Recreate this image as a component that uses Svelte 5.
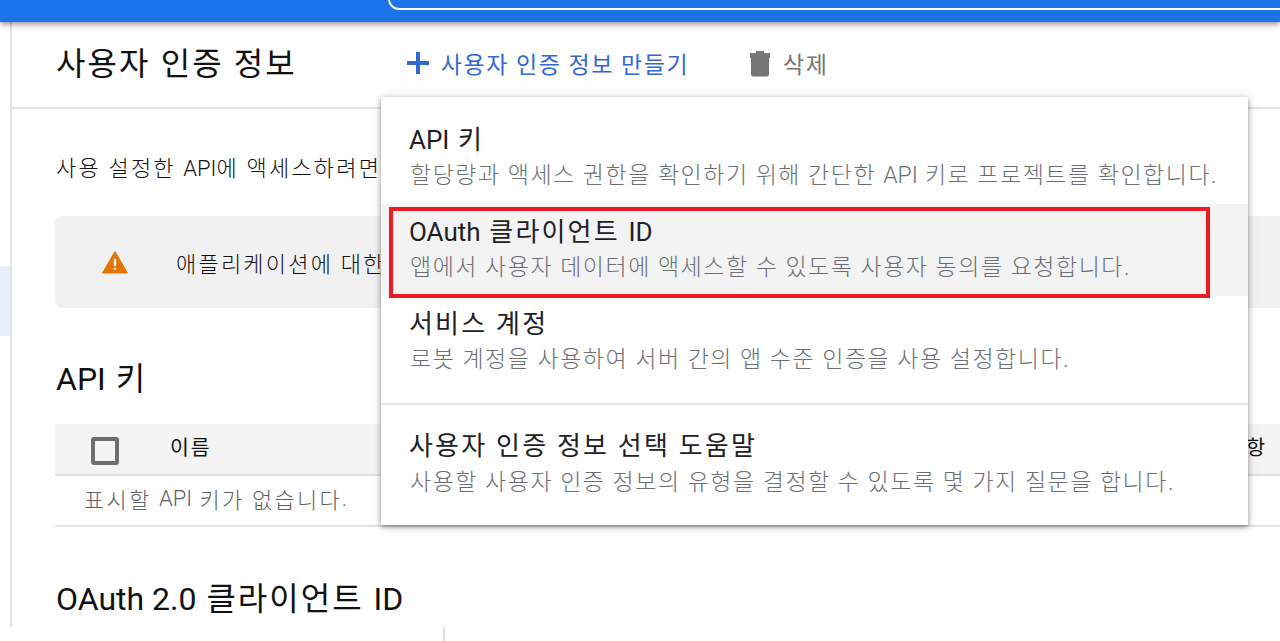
<script>
  const items = [
    { title: 'API 키', desc: '할당량과 액세스 권한을 확인하기 위해 간단한 API 키로 프로젝트를 확인합니다.' },
    { title: 'OAuth 클라이언트 ID', desc: '앱에서 사용자 데이터에 액세스할 수 있도록 사용자 동의를 요청합니다.', active: true },
    { title: '서비스 계정', desc: '로봇 계정을 사용하여 서버 간의 앱 수준 인증을 사용 설정합니다.' }
  ];
  // Latin runs keep natural spacing; only the Hangul runs are tracked out.
  const runs = (text) => text.split(/([A-Za-z0-9.]+(?: [0-9.]+)?)/).filter(Boolean).map((t) => ({ t, latin: /^[A-Za-z0-9.]/.test(t) }));
</script>

{#snippet mixed(text)}{#each runs(text) as r}<span class:latin={r.latin}>{r.t}</span>{/each}{/snippet}

<div class="page">
  <header class="topbar"><div class="search"></div></header>
  <div class="body">
    <aside class="rail"><div class="rail-active"></div></aside>
    <main class="main">
      <div class="head">
        <h1>사용자 인증 정보</h1>
        <button class="act create">
          <svg width="22" height="22" viewBox="0 0 22 22"><path d="M9 0h4v9h9v4h-9v9H9v-9H0V9h9z" fill="#3367d6"/></svg>
          사용자 인증 정보 만들기
        </button>
        <button class="act del">
          <svg class="bin" width="22" height="26" viewBox="0 0 22 26"><path d="M7 0h8v2H7zM1 2h20v5H1zM2 7h18v16a2.500 2.500 0 0 1-2.500 2.500h-13A2.500 2.500 0 0 1 2 23z" fill="#757575"/></svg>
          삭제
        </button>
      </div>
      <div class="content">
        <p class="intro">{@render mixed('사용 설정한 API에 액세스하려면')}</p>
        <div class="alert">
          <svg width="26" height="24" viewBox="0 0 26 24"><path d="M13 1.500 25.500 23H.5z" fill="#e37400" stroke="#e37400" stroke-linejoin="round"/><path d="M11.800 9h2.400v7h-2.400zM11.800 17.700h2.400v2.400h-2.400z" fill="#fff"/></svg>
          <span>애플리케이션에 대한</span>
        </div>
        <h2 class="api">{@render mixed('API 키')}</h2>
        <div class="thead">
          <span class="check"></span>
          <span class="name">이름</span>
          <span class="limit">제한사항</span>
        </div>
        <div class="empty">{@render mixed('표시할 API 키가 없습니다.')}</div>
        <h2 class="oauth">{@render mixed('OAuth 2.0 클라이언트 ID')}</h2>
      </div>
    </main>
  </div>
  <div class="foot"><span class="tick"></span></div>

  <div class="menu">
    <div class="group">
      {#each items as item}
        <div class="item" class:active={item.active}>
          <div class="title">{@render mixed(item.title)}</div>
          <div class="desc">{@render mixed(item.desc)}</div>
        </div>
      {/each}
    </div>
    <div class="item help">
      <div class="title">사용자 인증 정보 선택 도움말</div>
      <div class="desc">사용할 사용자 인증 정보의 유형을 결정할 수 있도록 몇 가지 질문을 합니다.</div>
    </div>
  </div>
  <div class="mark"></div>
</div>

<style>
  :global(body) { margin: 0; background: #fff; }
  .page {
    position: relative; width: 1280px; height: 641px; overflow: hidden;
    font-family: Roboto, "Noto Sans CJK KR", sans-serif; color: #111;
    display: flex; flex-direction: column;
  }
  .latin { letter-spacing: 0; }
  .topbar {
    height: 22px; flex: none; background: #1a73e8; position: relative; z-index: 2;
    box-shadow: 0 2px 6px rgba(0,0,0,.45); padding-left: 388px; box-sizing: border-box;
  }
  .search {
    height: 11px; margin-top: -1px; border: 2px solid #fff; border-top: 0; border-right: 0;
    border-radius: 0 0 0 12px; box-sizing: border-box;
  }
  .body { display: flex; height: 605px; flex: none; }
  .rail { width: 10px; flex: none; border-right: 2px solid #e2e2e2; padding-top: 244px; }
  .rail-active { height: 70px; background: #e8f0fe; }
  .main { flex: 1; min-width: 0; }
  .head {
    height: 87px; box-sizing: border-box; border-bottom: 2px solid #e2e2e2;
    display: flex; align-items: center; padding: 0 0 7px 44px;
  }
  h1 { font-size: 32px; font-weight: 400; margin: 0 110px 0 0; letter-spacing: 2.100px; }
  .act {
    background: none; border: 0; padding: 0; font: inherit; font-size: 23px; letter-spacing: 1.500px;
    display: flex; align-items: center; gap: 12px; margin-top: 3px;
  }
  .create { color: #3367d6; margin-right: 60px; }
  .del { color: #757575; gap: 12px; }
  .bin { margin-top: 2px; }
  .content { padding: 0 0 0 43px; }
  .intro { margin: 46px 0 0 1px; font-size: 22px; line-height: 28px; white-space: nowrap; letter-spacing: 2.200px; font-weight: 300; }
  .alert {
    margin-top: 33px; height: 92px; background: #f1f1f1; border-radius: 8px 0 0 8px;
    display: flex; align-items: center; padding-left: 47px; gap: 48px; font-size: 22px; letter-spacing: 2.200px; white-space: nowrap; font-weight: 300;
  }
  h2 { font-weight: 400; font-size: 32px; margin: 0; line-height: 40px; white-space: nowrap; letter-spacing: 2px; }
  .api { margin: 51px 0 0 1px; }
  .thead {
    margin-top: 25px; height: 52px; box-sizing: border-box; background: #f4f4f4;
    border-bottom: 2px solid #e2e2e2; display: flex; align-items: center; padding: 0 13px 0 36px;
    font-size: 20.500px; letter-spacing: 1.900px;
  }
  .check { width: 28px; height: 28px; box-sizing: border-box; border: 4px solid #6e6e6e; border-radius: 3px; margin-top: 4px; }
  .name { margin-left: 51px; margin-top: -6px; }
  .limit { margin-left: auto; margin-top: -6px; }
  .empty {
    height: 51px; box-sizing: border-box; border-bottom: 2px solid #e2e2e2; padding-left: 29px;
    display: flex; align-items: center; font-size: 22px; letter-spacing: 2.200px; color: #5f6368; padding-bottom: 5px; font-weight: 300; white-space: pre;
  }
  .oauth { margin: 52px 0 0 1px; }
  .foot { flex: none; height: 14px; padding-left: 443px; background: #fff; position: relative; z-index: 1; }
  .tick { display: block; width: 2px; height: 14px; background: #dedede; }

  .menu {
    position: absolute; left: 381px; top: 97px; width: 867px; height: 428px; z-index: 3;
    background: #fff; box-shadow: 0 2px 5px rgba(0,0,0,.4), 0 0 12px rgba(0,0,0,.1);
  }
  .group { height: 308px; padding-top: 15px; box-sizing: border-box; border-bottom: 2px solid #e8e8e8; }
  .item { height: 92px; padding-left: 29px; box-sizing: border-box; padding-top: 10px; white-space: nowrap; }
  .active { background: #f3f3f3; }
  .title { font-size: 26px; line-height: 36px; color: #202124; letter-spacing: 2.200px; margin-left: -1px; }
  .desc { font-size: 23px; line-height: 35px; color: #6b6f73; letter-spacing: 1.500px; font-weight: 300; }
  .help { padding-top: 23px; }
  .help .desc { margin-top: 1px; }
  .mark {
    position: absolute; left: 389px; top: 207px; width: 821px; height: 91px; z-index: 4;
    box-sizing: border-box; border: 4px solid #ed1c24;
  }
</style>
